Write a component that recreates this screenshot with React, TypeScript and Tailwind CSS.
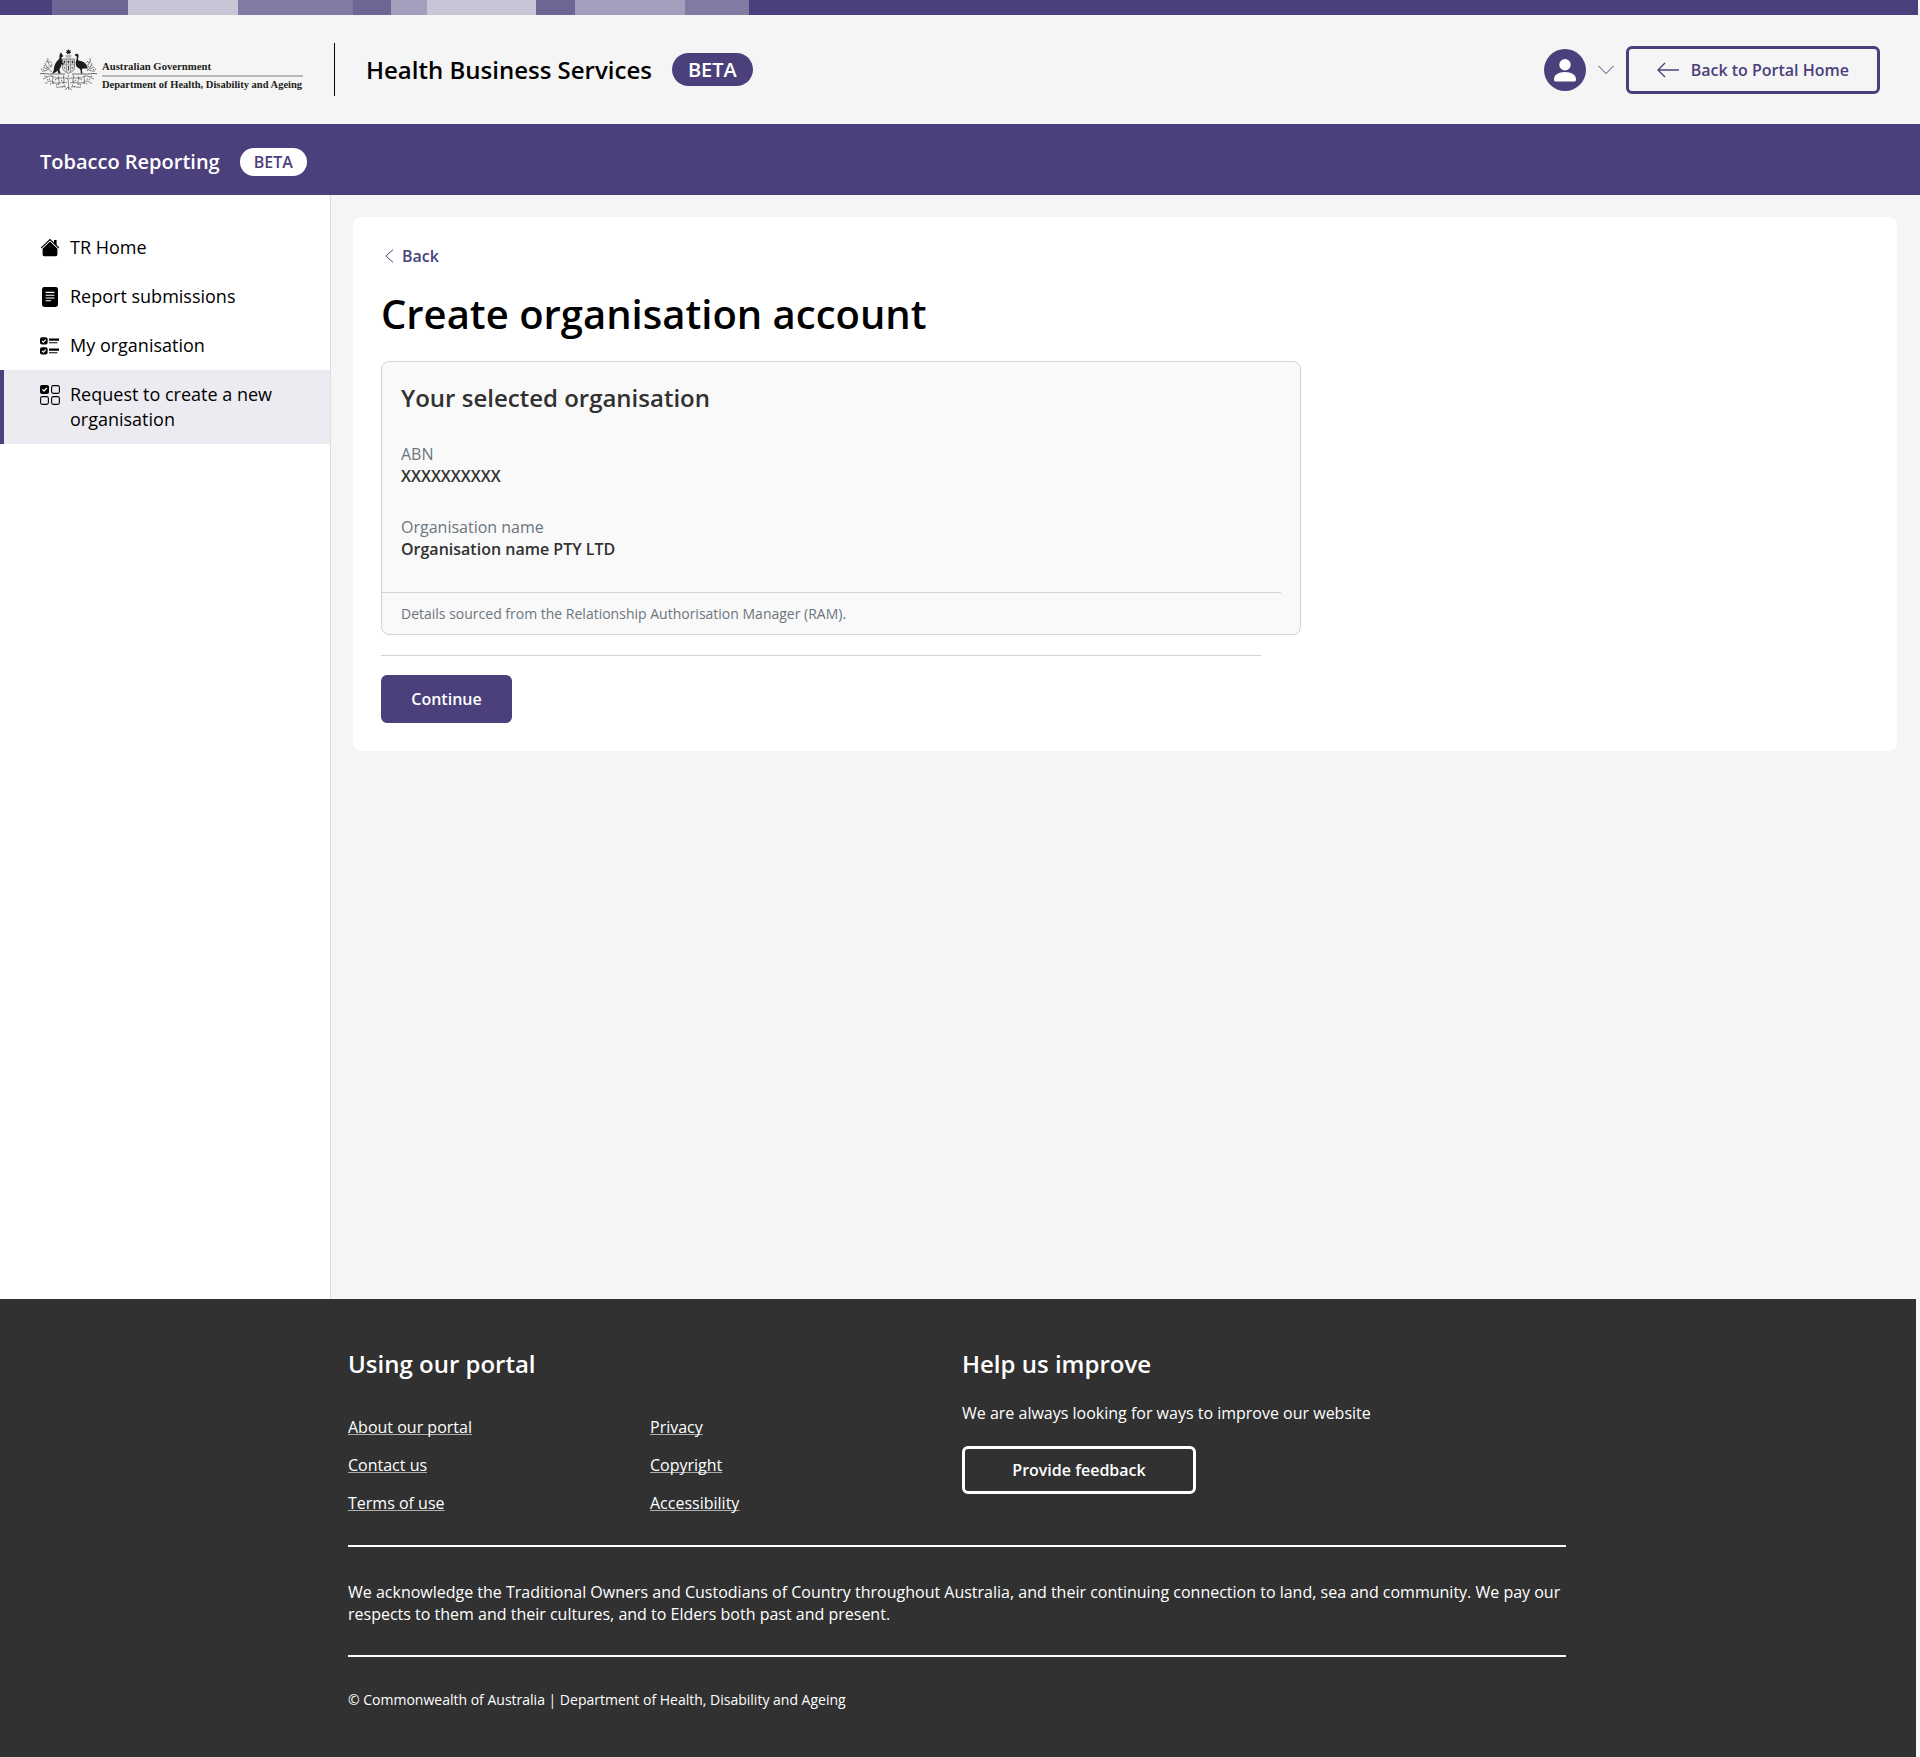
import React from 'react';
import clsx from 'clsx';

interface NavItem {
  label: string;
  icon: React.ReactNode;
  active?: boolean;
}

const HomeIcon = () => (
  <svg viewBox="0 0 20 20" className="w-5 h-5" fill="currentColor">
    <path d="M10 3.6 2.6 10.6V16.6A1.6 1.6 0 0 0 4.2 18.2H15.8A1.6 1.6 0 0 0 17.4 16.6V10.6Z" />
    <path d="M1.2 10 10 1.6 18.8 10" fill="none" stroke="currentColor" strokeWidth="1.2" />
    <path d="M10 3 2.2 10.4M10 3 17.8 10.4" stroke="#fff" strokeWidth="0.6" />
    <path d="M14 2H16.6V7.4L14 5Z" />
  </svg>
);

const ReportIcon = () => (
  <svg viewBox="0 0 20 20" className="w-5 h-5">
    <rect x="2" y="0" width="16" height="20" rx="2.4" fill="currentColor" />
    <path d="M5.6 5.4H14.4M5.6 8.2H14.4M5.6 11H14.4M5.6 13.8H11" stroke="#fff" strokeWidth="1.1" />
  </svg>
);

const ChecklistIcon = () => (
  <svg viewBox="0 0 20 20" className="w-5 h-5">
    <rect x="0" y="1.2" width="7.6" height="7.2" rx="2" fill="currentColor" />
    <rect x="0" y="11.2" width="7.6" height="7.2" rx="2" fill="currentColor" />
    <path d="M2 4.8 3.4 6.2 5.8 3.6M2 14.8 3.4 16.2 5.8 13.6" fill="none" stroke="#fff" strokeWidth="1.2" />
    <path d="M9 3.6H19M9 13.6H19" stroke="currentColor" strokeWidth="2.2" />
    <path d="M9 6.8H17.4M9 16.8H17.4" stroke="currentColor" strokeWidth="1.1" />
  </svg>
);

const RequestIcon = () => (
  <svg viewBox="0 0 20 20" className="w-5 h-5" fill="none">
    <rect x="0" y="0" width="9" height="9" rx="2" fill="currentColor" />
    <path d="M2.4 4.4 4 6 6.8 3" stroke="#fff" strokeWidth="1.3" />
    <g stroke="currentColor" strokeWidth="1.1">
      <rect x="11.6" y="0.6" width="7.8" height="7.8" rx="1.8" />
      <rect x="0.6" y="11.6" width="7.8" height="7.8" rx="1.8" />
      <rect x="11.6" y="11.6" width="7.8" height="7.8" rx="1.8" />
    </g>
  </svg>
);

const DepartmentLogo = () => (
  <svg
    viewBox="0 0 263 42"
    className="w-[263px] h-[42px] shrink-0 font-['Liberation_Serif',serif] font-bold"
    fill="none"
    role="img"
    aria-label="Australian Government, Department of Health, Disability and Ageing"
  >
    {/* Commonwealth star and wreath */}
    <path d="M28.5 0 29.2 1.5 30.8 1.1 30.1 2.6 31.4 3.6 29.8 3.9 29.8 5.5 28.5 4.5 27.2 5.5 27.2 3.9 25.6 3.6 26.9 2.6 26.2 1.1 27.8 1.5Z" fill="#1d1d1b" />
    <path d="M25.4 6.8H31.6M26 8H31" stroke="#777" strokeWidth="0.7" />

    {/* Shield */}
    <path d="M22.5 10H34.5V18.5C34.5 21.4 31.6 23.2 28.5 24.4 25.4 23.2 22.5 21.4 22.5 18.5Z" fill="#ddd" stroke="#555" strokeWidth="0.7" />
    <path d="M26.5 10V23M30.5 10V23M22.5 15.8H34.5" stroke="#777" strokeWidth="0.6" />
    <path d="M24.5 11.5V14.4M23.3 13H25.7M28.5 11.5V14.6M27.5 12.8H29.5M32.5 11.5V14.4M31.3 13H33.7M24 18.4 25.4 19.6M28.5 17V21.5M31.8 18 33 19.6" stroke="#333" strokeWidth="0.9" />

    {/* Kangaroo */}
    <path d="M20.4 3.2 20.9 4.9 21.8 3.4 22 5.6C22.9 6.1 23.4 7 23.1 7.6L21.6 8.1C21.4 9.8 22.3 11.5 22 13.6L24 14.8 23.6 15.6 21.5 15.4C21.1 17.4 20.5 18.9 19.4 20.2L20.2 23.4 21.4 24.6H18.4L17.4 21.6C16.2 23.3 14.6 24.3 11.4 24.6 13.3 23.4 13.7 21.4 13.9 19.4 14.3 15.6 16.1 12.6 18.7 10.4 19.6 9.4 19.5 8.2 19.5 6.8 19.5 5.5 19.9 4.4 20.4 3.2Z" fill="#1d1d1b" />

    {/* Emu */}
    <path d="M35.1 5.6C36.2 4.3 38.2 4.7 38.5 6.3 38.8 8.1 37.6 9.4 38.1 11 38.9 12.3 41.4 11.8 43.4 12.9 45.9 14.2 47.4 16.7 47.6 19.2 45.7 19.9 43.9 19.4 42.6 19.6L41.8 21.1 42.6 24.6H40.8L40.6 21.2 39.4 19.4C36.9 18.7 35.5 16.7 35.7 13.9 35.9 11.6 37 9.5 36.8 7.4 36.4 6.6 35.5 6.7 34.8 6.8Z" fill="#1d1d1b" />

    {/* Ground line */}
    <path d="M0 24.8C4 23.8 8 25.6 13 25H25M32 25H44C49 25.6 53 23.8 57 24.8" stroke="#666" strokeWidth="1" />

    {/* Wattle sprays */}
    <g stroke="#555" strokeWidth="0.7">
      <path d="M2 22C6 22.6 10 20 12 15M5 14C6 18 9 21 12 23M8 9C7 13 9 16 12 18M3 18 7 20M9 12 12 14" />
      <path d="M55 22C51 22.6 48 21 46 19M52 14C51 18 49 20 47 22M50 9C51 13 49 16 46 17M54 18 50 20M48 12 46 14" />
      <path d="M28.5 26C27 30 29.5 33 28.5 41M28 30C23 27 18 31 14 28S7 29 3 30M29 30C34 27 39 31 43 28S50 29 54 30" />
      <path d="M27 34C22 32 18 36 13 33S8 35 5 34M30 34C35 32 39 36 44 33S49 35 52 34M26 38C22 37 19 39 16 38M31 38C35 37 38 39 41 38" />
      <path d="M12 27C14 30 11 32 14 35M19 27C17 30 21 33 18 36M24 26C22 29 26 31 23 35M45 27C43 30 46 32 43 35M38 27C40 30 36 33 39 36M33 26C35 29 31 31 34 35M25 41 28 38 32 41" />
    </g>
    <path d="M1 20 4 21M4 17 6 16M6 12 9 14M7 19 9 17M4 27 8 28M7 31 10 30M10 35 13 34M15 31 18 29M16 36 19 35M21 31 24 33M22 38 25 36M53 21 56 20M51 16 53 17M48 14 51 12M48 17 50 19M49 28 53 27M47 30 50 31M44 34 47 35M39 29 42 31M38 35 41 36M33 33 36 31M32 36 35 38" stroke="#777" strokeWidth="1.2" strokeDasharray="1.3 0.8" />

    <text x="62" y="21.3" fontSize="10.7" fill="#1d1d1b">Australian Government</text>
    <path d="M62 27H263" stroke="#b8b8b8" strokeWidth="2" />
    <text x="62" y="39.3" fontSize="10.5" fill="#1d1d1b">Department of Health, Disability and Ageing</text>
  </svg>
);

// Decorative strip above the header
const stripSegments = [
  'w-[52px] bg-[#4b407c]',
  'w-[76px] bg-[#6e6795]',
  'w-[110px] bg-[#c9c5d7]',
  'w-[115px] bg-[#827aa3]',
  'w-[38px] bg-[#6e6795]',
  'w-[36px] bg-[#a59fbd]',
  'w-[109px] bg-[#c9c5d7]',
  'w-[39px] bg-[#6e6795]',
  'w-[110px] bg-[#a59fbd]',
  'w-[64px] bg-[#827aa3]',
];

const navItems: NavItem[] = [
  { label: 'TR Home', icon: <HomeIcon /> },
  { label: 'Report submissions', icon: <ReportIcon /> },
  { label: 'My organisation', icon: <ChecklistIcon /> },
  { label: 'Request to create a new organisation', icon: <RequestIcon />, active: true },
];

const footerLinks = ['About our portal', 'Privacy', 'Contact us', 'Copyright', 'Terms of use', 'Accessibility'];

const Header: React.FC = () => (
  <header>
    <div className="flex h-[15px] mr-0.5">
      {stripSegments.map((segment, i) => (
        <div key={i} className={segment} />
      ))}
      <div className="flex-1 bg-[#4b407c]" />
    </div>

    <div className="flex items-center justify-between h-[109px] px-10">
      <div className="flex items-center">
        <DepartmentLogo />
        <div className="w-px h-[53px] bg-black mx-[31px]" />
        <span className="text-2xl font-semibold text-black">Health Business Services</span>
        <span className="ml-5 flex items-center h-[33px] px-4 rounded-full bg-[#4b407c] text-white text-xl font-semibold">BETA</span>
      </div>

      <div className="flex items-center">
        <button type="button" aria-label="Account menu" className="flex items-center gap-3">
          <svg viewBox="0 0 42 42" className="w-[42px] h-[42px]">
            <circle cx="21" cy="21" r="21" fill="#4b407c" />
            <circle cx="21" cy="15.8" r="5.7" fill="#fff" />
            <path d="M10 31V30.2C10 26 14.6 23 21 23S32 26 32 30.2V31A1.4 1.4 0 0 1 30.6 32.4H11.4A1.4 1.4 0 0 1 10 31Z" fill="#fff" />
          </svg>
          <svg viewBox="0 0 16 10" className="w-4 h-2.5" fill="none" stroke="#4b407c">
            <path d="M0.4 0.8 8 8.6 15.6 0.8" />
          </svg>
        </button>
        <button type="button" className="ml-3 flex items-center gap-3 h-12 px-7 rounded-md border-3 border-[#4b407c] text-[#4b407c] text-base font-semibold">
          <svg viewBox="0 0 22 16" className="w-[22px] h-4" fill="none" stroke="currentColor" strokeWidth="1.3">
            <path d="M22 8H1M8 1 1 8 8 15" />
          </svg>
          Back to Portal Home
        </button>
      </div>
    </div>

    <div className="flex items-center gap-5 h-[71px] px-10 pt-1 bg-[#4b407c] text-white">
      <span className="text-xl font-semibold">Tobacco Reporting</span>
      <span className="flex items-center h-7 px-3.5 rounded-full bg-white text-[#4b407c] text-base font-semibold">BETA</span>
    </div>
  </header>
);

const Sidebar: React.FC = () => (
  <nav className="w-[331px] shrink-0 bg-white border-r border-[#dedede] pt-7">
    {navItems.map((item) => (
      <a
        key={item.label}
        href="#"
        className={clsx(
          'flex gap-2.5 pl-9 pr-8 py-3 border-l-4 text-lg leading-[25px] text-black',
          item.active ? 'bg-[#edebf2] border-[#4b407c]' : 'border-transparent',
        )}
      >
        <span className="shrink-0 pt-[3px]">{item.icon}</span>
        {item.label}
      </a>
    ))}
  </nav>
);

const OrganisationCard: React.FC = () => (
  <section className="max-w-[920px] mt-5 rounded-lg border border-[#d3d3d3] bg-[#f9f9f9] text-[#313131]">
    <h2 className="px-[19px] pt-5 text-2xl leading-8 font-semibold">Your selected organisation</h2>
    <dl className="px-[19px] text-base leading-[22px]">
      <dt className="mt-[29px] text-[#6c757d]">ABN</dt>
      <dd className="font-semibold">XXXXXXXXXX</dd>
      <dt className="mt-[29px] text-[#6c757d]">Organisation name</dt>
      <dd className="font-semibold">Organisation name PTY LTD</dd>
    </dl>
    <hr className="mt-8 mr-[19px] border-[#d3d3d3]" />
    <p className="px-[19px] pt-3 pb-[11px] text-sm leading-[18px] text-[#6c757d]">
      Details sourced from the Relationship Authorisation Manager (RAM).
    </p>
  </section>
);

const Footer: React.FC = () => (
  <footer className="mr-1 bg-[#313131] text-white text-base leading-[22px]">
    <div className="ml-[348px] max-w-[1218px] pt-[47px] pb-[46px]">
      <div className="flex pb-[31px]">
        <div className="w-[614px]">
          <h2 className="text-2xl leading-9 font-semibold">Using our portal</h2>
          <ul className="grid grid-cols-[302px_auto] gap-y-4 mt-[34px]">
            {footerLinks.map((link) => (
              <li key={link}>
                <a
                  href="#"
                  className="underline decoration-1 decoration-white/60 underline-offset-1 [text-decoration-skip-ink:none]"
                >
                  {link}
                </a>
              </li>
            ))}
          </ul>
        </div>
        <div>
          <h2 className="text-2xl leading-9 font-semibold">Help us improve</h2>
          <p className="mt-5">We are always looking for ways to improve our website</p>
          <button type="button" className="mt-[22px] w-[234px] h-12 rounded-md border-3 border-white font-semibold">
            Provide feedback
          </button>
        </div>
      </div>
      <p className="border-y-2 border-white pt-[34px] pb-[30px]">
        We acknowledge the Traditional Owners and Custodians of Country throughout Australia, and their continuing
        connection to land, sea and community. We pay our respects to them and their cultures, and to Elders both past
        and present.
      </p>
      <p className="pt-8 text-sm leading-[22px]">© Commonwealth of Australia | Department of Health, Disability and Ageing</p>
    </div>
  </footer>
);

const App: React.FC = () => {
  return (
    <div className="min-h-screen flex flex-col bg-[#f5f5f5] font-['Open_Sans',sans-serif]">
      <Header />
      <div className="flex flex-1">
        <Sidebar />
        <main className="flex-1 py-[22px] pl-[22px] pr-[23px]">
          <div className="rounded-lg bg-white p-7">
            <a href="#" className="flex w-fit items-center gap-2 pl-1 text-base leading-[22px] font-semibold text-[#4b407c]">
              <svg viewBox="0 0 9 14" className="w-[9px] h-3.5" fill="none" stroke="currentColor">
                <path d="M8 0.6 1 7 8 13.4" />
              </svg>
              Back
            </a>
            <h1 className="mt-5 text-[40px] leading-[54px] font-semibold text-black">Create organisation account</h1>
            <OrganisationCard />
            <hr className="max-w-[880px] mt-5 mb-[19px] border-[#d3d3d3]" />
            <button type="button" className="w-[131px] h-12 rounded-md bg-[#4b407c] text-white text-base font-semibold">
              Continue
            </button>
          </div>
        </main>
      </div>
      <Footer />
    </div>
  );
};

export default App;
